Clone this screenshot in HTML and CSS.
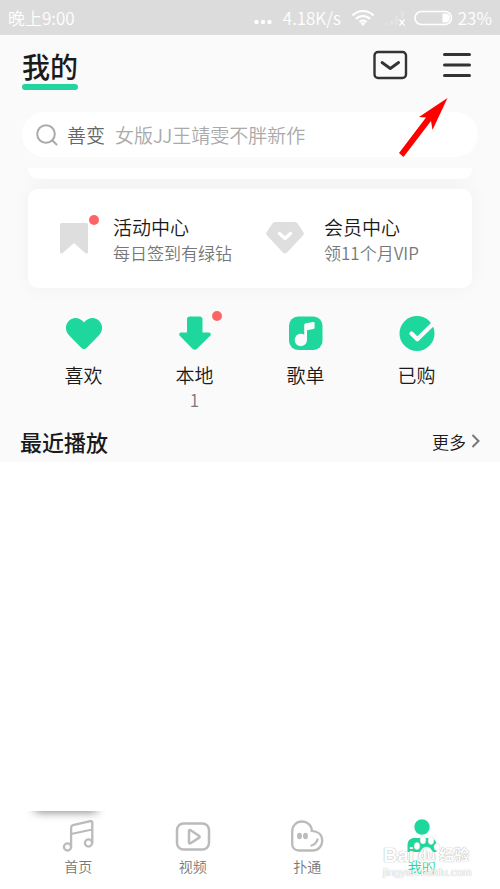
FILE: index.html
```html
<!DOCTYPE html>
<html lang="zh-CN">
<head>
    <meta charset="UTF-8">
    <meta name="viewport" content="width=device-width, initial-scale=1.0">
    <title>我的</title>
    <link rel="stylesheet" href="styles.css">
</head>
<body>
    <div class="status-bar">
        <span class="status-time">晚上9:00</span>
        <svg class="status-dots" width="18" height="18" viewBox="0 0 18 18" fill="#fff">
            <circle cx="2.5" cy="13" r="2.2"/><circle cx="9" cy="13" r="2.2"/><circle cx="15.5" cy="13" r="2.2"/>
        </svg>
        <span class="status-speed">4.18K/s</span>
        <svg class="status-wifi" width="24" height="18" viewBox="0 0 24 18" fill="none" stroke="#fff" stroke-width="2.2">
            <path d="M1.5 6.500C7.500 0.500 16.500 0.500 22.500 6.500M5 10C9 6 15 6 19 10M8.500 13C10.500 11 13.500 11 15.500 13"/>
            <path d="M9.500 14.200C11 12.800 13 12.800 14.500 14.200L12 17Z" fill="#fff" stroke="none"/>
        </svg>
        <svg class="status-signal" width="22" height="18" viewBox="0 0 22 18">
            <path d="M1 14h3v2H1zM6 11h3v5H6zM11 7h3v9h-3zM17 2h3v7h-3z" fill="#e2e2e2"/>
            <path d="M15.500 10.500l5 6M20.500 10.500l-5 6" stroke="#fff" stroke-width="1.3"/>
        </svg>
        <svg class="status-battery" width="39" height="16" viewBox="0 0 39 16">
            <rect x="1" y="1.5" width="36.5" height="13" rx="6.5" fill="none" stroke="#fff" stroke-width="1.6"/>
            <path d="M28.500 3.500h3a4.500 4.500 0 0 1 0 9h-3z" fill="#fff"/>
        </svg>
        <span class="status-percent">23%</span>
    </div>

    <header class="header">
        <h1>我的</h1>
        <button type="button" class="icon-button" aria-label="消息">
            <svg width="36" height="30" viewBox="0 0 36 30" fill="none" stroke="#333" stroke-linecap="round" stroke-linejoin="round">
                <rect x="2.500" y="2" width="31.5" height="26" rx="3.5" stroke-width="2.4"/>
                <path d="M10 12.500l8.300 6 8.300-6" stroke-width="2.8"/>
            </svg>
        </button>
        <button type="button" class="icon-button" aria-label="菜单">
            <svg width="30" height="30" viewBox="0 0 30 30" stroke="#333" stroke-width="3" stroke-linecap="round">
                <path d="M2.500 4.500h25M2.500 15h25M2.500 25.500h25"/>
            </svg>
        </button>
    </header>

    <form class="search">
        <svg width="22" height="22" viewBox="0 0 22 22" fill="none" stroke="#aaa" stroke-width="2" stroke-linecap="round">
            <circle cx="10" cy="10" r="8.8"/>
            <path d="M16.500 16.500l4 4"/>
        </svg>
        <label for="keyword">善变</label>
        <input type="text" id="keyword" placeholder="女版JJ王靖雯不胖新作">
    </form>

    <main class="content">
        <div class="cards">
            <div class="card card-end"></div>
            <div class="card">
                <a href="#activity" class="card-link">
                    <span class="card-icon">
                        <svg width="28" height="32" viewBox="0 0 28 32">
                            <path d="M1.500 0h25A1.500 1.500 0 0 1 28 1.500v27.500c0 1.500-1.500 2-2.500 1.200L14 20 2.500 30.200C1.500 31 0 30.500 0 29V1.500A1.500 1.500 0 0 1 1.500 0z" fill="#dedede"/>
                        </svg>
                        <i class="dot dot-card"></i>
                    </span>
                    <span class="card-text">
                        <strong>活动中心</strong>
                        <small>每日签到有绿钻</small>
                    </span>
                </a>
                <a href="#vip" class="card-link">
                    <span class="card-icon">
                        <svg width="38" height="33" viewBox="0 0 38 33">
                            <path d="M9 0h20c1 0 1.800.4 2.400 1.200l6 9c.7 1 .6 2.100-.2 3L21 30.500c-1.200 1.300-2.800 1.300-4 0L.8 13.200c-.8-.9-.9-2-.2-3l6-9C7.200.4 8 0 9 0z" fill="#dedede"/>
                            <path d="M13.500 11.500l5.500 5 5.500-5" fill="none" stroke="#fff" stroke-width="3.4" stroke-linecap="round" stroke-linejoin="round"/>
                        </svg>
                    </span>
                    <span class="card-text">
                        <strong>会员中心</strong>
                        <small>领11个月VIP</small>
                    </span>
                </a>
            </div>
        </div>

        <nav class="shortcuts">
            <a href="#like">
                <svg width="38" height="36" viewBox="0 0 38 36">
                    <path d="M19 6.500C23 1 30 0.500 33.800 4.500c4.500 4.300 4.200 10.500.2 14.800L22 31.400c-2 2-4 2-6 0L4 19.300C0 15-.3 8.800 4.200 4.500 8 .5 15 1 19 6.500z" fill="#1ed79c"/>
                </svg>
                <span>喜欢</span>
            </a>
            <a href="#local">
                <svg width="38" height="36" viewBox="0 0 38 36">
                    <path d="M14 0.500h9.500c2 0 3 1 3 3v13h6c2.200 0 3 2 1.500 3.500L21 32.700c-1.500 1.500-3 1.500-4.500 0L4 20c-1.500-1.500-.7-3.500 1.500-3.500H11v-13c0-2 1-3 3-3z" fill="#1ed79c"/>
                </svg>
                <i class="dot dot-local"></i>
                <span>本地</span>
                <small>1</small>
            </a>
            <a href="#playlist">
                <svg width="38" height="36" viewBox="0 0 38 36">
                    <rect x="2" y="0.5" width="33.5" height="33.5" rx="9" fill="#1ed79c"/>
                    <path d="M17.200 18.800V9.200c0-1 .6-1.700 1.600-1.900l7.500-1.200c.8-.1 1.300.3 1.300 1.100v4.200c0 .8-.5 1.400-1.300 1.600l-6.300 1.200V24a6.200 6.200 0 1 1-2.800-5.200z" fill="#fafafa"/>
                </svg>
                <span>歌单</span>
            </a>
            <a href="#bought">
                <svg width="38" height="36" viewBox="0 0 38 36">
                    <circle cx="19" cy="17.5" r="17.5" fill="#1ed79c"/>
                    <path d="M13.500 17.500l5.800 5.800L37 6" fill="none" stroke="#fafafa" stroke-width="4.2" stroke-linecap="round" stroke-linejoin="round"/>
                </svg>
                <span>已购</span>
            </a>
        </nav>

        <div class="section-head">
            <h2>最近播放</h2>
            <a href="#more">更多
                <svg width="10" height="16" viewBox="0 0 10 16" fill="none" stroke="#777" stroke-width="2">
                    <path d="M1.500 2l6 6-6 6"/>
                </svg>
            </a>
        </div>
    </main>

    <nav class="tab-bar">
        <div class="player-shadow"></div>
        <a href="#home">
            <svg width="36" height="36" viewBox="0 0 36 36" fill="none" stroke="#bbb" stroke-width="2.3" stroke-linejoin="round">
                <circle cx="7.5" cy="29" r="3.6"/>
                <circle cx="28.5" cy="25" r="3.6"/>
                <path d="M11.100 29V9.500c0-1.300.6-2 1.800-2.300l17.600-4c1-.2 1.800.3 1.800 1.300V25M11.100 16l21.200-4.500"/>
            </svg>
            <span>首页</span>
        </a>
        <a href="#video">
            <svg width="36" height="36" viewBox="0 0 36 36" fill="none" stroke="#bbb" stroke-width="2.5" stroke-linejoin="round">
                <rect x="2" y="5.5" width="32" height="26" rx="6.5"/>
                <path d="M14 13v11.500c0 1 .8 1.300 1.600.8l8.300-5.400c1-.7 1-1.500 0-2.100l-8.300-5.500c-.8-.5-1.600-.2-1.600.7z"/>
            </svg>
            <span>视频</span>
        </a>
        <a href="#putong">
            <svg width="36" height="36" viewBox="0 0 36 36" fill="none" stroke="#bbb" stroke-width="2.3" stroke-linecap="round">
                <path d="M3.200 13.500c0-6 4.300-10 9.800-10 5.300 0 9.800 4 9.800 9.300 6 .3 10.400 3.800 10.400 9.700 0 5.700-4 10-9.500 10H10c-4 0-6.800-2.500-6.800-6.500z"/>
                <path d="M28.500 21.500c-.8 3-2.500 5-6 6"/>
                <ellipse cx="10.500" cy="18" rx="1.300" ry="2" fill="#bbb"/>
                <ellipse cx="16.500" cy="18" rx="1.300" ry="2" fill="#bbb"/>
            </svg>
            <span>扑通</span>
        </a>
        <a href="#mine" class="active">
            <svg width="36" height="36" viewBox="0 0 36 36" fill="#1ed79c">
                <circle cx="18" cy="9" r="7.7"/>
                <path d="M3.500 34v-7c0-4.500 3-7 7-7h15c4 0 7 2.500 7 7v7z"/>
            </svg>
            <span>我的</span>
        </a>
        <div class="watermark">
            <svg width="28" height="30" viewBox="0 0 28 30" fill="#fff" stroke="#ddd" stroke-width="0.6">
                <ellipse cx="4" cy="11" rx="2.8" ry="3.6"/>
                <ellipse cx="10" cy="5" rx="2.8" ry="3.9"/>
                <ellipse cx="18" cy="5.500" rx="2.8" ry="3.9"/>
                <ellipse cx="24" cy="12" rx="3" ry="3.6"/>
                <path d="M13.500 12c4 0 4.500 3 7 5.500 3.500 3.500 3 10-2.500 10-3 0-6-.7-9 0-5.500 0-6-6.500-2.500-10C9 15 9.500 12 13.500 12z"/>
            </svg>
            <div class="watermark-brand">
                <span>Bai</span>
                <span class="watermark-du">du</span>
                <span class="watermark-cn">经验</span>
            </div>
            <div class="watermark-url">jingyan.baidu.com</div>
        </div>
    </nav>

    <svg class="pointer" width="50" height="62" viewBox="0 0 50 62">
        <path d="M48.500 1L33.500 33l-1.500-9L4.500 60 0 56 27 20.500l-7-.5z" fill="#f00"/>
    </svg>
</body>
</html>
```
FILE: styles.css
```css
* {
    box-sizing: border-box;
}

body {
    position: relative;
    display: flex;
    flex-direction: column;
    min-height: 100vh;
    margin: 0;
    font-family: "Noto Sans CJK SC", "Noto Sans", sans-serif;
    font-weight: 350;
    color: #1a1a1a;
    background: #fff;
}

a {
    color: inherit;
    text-decoration: none;
}

svg {
    display: block;
    flex-shrink: 0;
}

/* status bar */
.status-bar {
    display: flex;
    align-items: center;
    height: 35px;
    padding: 0 8px;
    font-size: 17px;
    color: #fff;
    background: #dcdcdc;
}

.status-time {
    margin-right: auto;
}

.status-dots {
    margin-right: 11px;
}

.status-speed {
    margin-right: 10px;
}

.status-wifi {
    margin-right: 9px;
}

.status-signal {
    margin-right: 8px;
}

.status-battery {
    margin-right: 5px;
}

/* header */
.header {
    display: flex;
    align-items: flex-start;
    height: 77px;
    padding: 15px 28px 0 22px;
    background: #fafafa;
}

.header h1 {
    margin: 0 auto 0 0;
    font-size: 28px;
    font-weight: 500;
    line-height: 32px;
}

.header h1::after {
    content: "";
    display: block;
    height: 6px;
    margin-top: 2px;
    border-radius: 3px;
    background: #22d59c;
}

.icon-button {
    padding: 0;
    border: none;
    background: none;
    cursor: pointer;
}

.icon-button + .icon-button {
    margin-left: 34px;
}

/* search */
.search {
    display: flex;
    align-items: center;
    height: 56px;
    padding: 0 36px 11px;
    font-size: 19px;
    background: #fafafa;
    position: relative;
    z-index: 0;
}

.search::before {
    content: "";
    position: absolute;
    inset: 0 22px 11px;
    z-index: -1;
    border-radius: 23px;
    background: #fff;
}

.search label {
    margin: 0 10px 0 9px;
    color: #666;
}

.search input {
    flex: 1;
    min-width: 0;
    padding: 0;
    border: none;
    outline: none;
    font: inherit;
    background: none;
}

.search input::placeholder {
    color: #aaa;
    opacity: 1;
}

/* content */
.content {
    overflow: hidden;
    background: #fafafa;
}

.cards {
    display: flex;
    flex-direction: column;
    gap: 10px;
    padding: 0 28px;
}

.card {
    display: grid;
    grid-template-columns: 1fr 1fr;
    column-gap: 2px;
    height: 99px;
    padding-left: 24px;
    border-radius: 10px;
    background: #fff;
    box-shadow: 0 0 20px rgba(0, 0, 0, 0.04);
}

.card-end {
    height: 11px;
    border-radius: 0 0 10px 10px;
}

.card-link {
    display: flex;
    align-items: center;
    gap: 17px;
}

.card-icon {
    position: relative;
    display: flex;
    justify-content: center;
    width: 44px;
}

.card-text {
    display: flex;
    flex-direction: column;
    padding-top: 2px;
}

.card-text strong {
    font-size: 19px;
    font-weight: 350;
    line-height: 26px;
}

.card-text small {
    font-size: 17px;
    line-height: 26px;
    color: #777;
}

.dot {
    position: absolute;
    width: 10px;
    height: 10px;
    border-radius: 50%;
    background: #ff6464;
}

.dot-card {
    top: -8px;
    right: -3px;
}

.dot-local {
    top: -5px;
    left: 73px;
}

/* shortcuts */
.shortcuts {
    display: grid;
    grid-template-columns: repeat(4, 1fr);
    padding: 28px 28px 0;
}

.shortcuts a {
    position: relative;
    display: flex;
    flex-direction: column;
    align-items: center;
    height: 104px;
}

.shortcuts span {
    margin-top: 9px;
    font-size: 19px;
    line-height: 28px;
}

.shortcuts small {
    font-size: 17px;
    line-height: 22px;
    color: #777;
}

.section-head {
    display: flex;
    align-items: center;
    justify-content: space-between;
    height: 42px;
    padding: 0 19px 0 20px;
}

.section-head h2 {
    margin: 0;
    font-size: 22px;
    font-weight: 500;
}

.section-head a {
    display: flex;
    align-items: center;
    gap: 5px;
    font-size: 17px;
}

/* bottom tabs */
.tab-bar {
    position: relative;
    display: grid;
    grid-template-columns: repeat(4, 1fr);
    height: 78px;
    margin-top: auto;
    padding: 7px 21px 0;
    overflow: hidden;
    background: #fff;
}

.tab-bar a {
    display: flex;
    flex-direction: column;
    align-items: center;
    font-size: 14px;
    line-height: 24px;
    color: #777;
}

.tab-bar .active {
    color: #1ed79c;
}

.player-shadow {
    position: absolute;
    top: -10px;
    left: 34px;
    width: 64px;
    height: 10px;
    border-radius: 10px;
    box-shadow: 0 1px 10px rgba(0, 0, 0, 0.5);
}

.watermark {
    position: absolute;
    right: 24px;
    bottom: 11px;
    width: 93px;
    color: #fff;
    font-family: "Liberation Sans", "Noto Sans CJK SC", sans-serif;
    text-shadow: 0 0 1px #aaa, 0 0 1px #bbb;
}

.watermark svg {
    position: absolute;
    top: -9px;
    left: 30px;
}

.watermark-brand {
    position: relative;
    display: flex;
    align-items: center;
    gap: 4px;
    font-size: 20px;
    font-weight: 700;
    line-height: 22px;
}

.watermark-du {
    font-size: 14px;
}

.watermark-cn {
    font-size: 15px;
}

.watermark-url {
    position: relative;
    font-size: 11px;
    font-weight: 400;
    line-height: 12px;
    text-shadow: 0 0 1px #bbb, 0 0 1px #ccc;
}

/* red arrow towards the menu button */
.pointer {
    position: absolute;
    top: 97px;
    right: 51px;
}
```
